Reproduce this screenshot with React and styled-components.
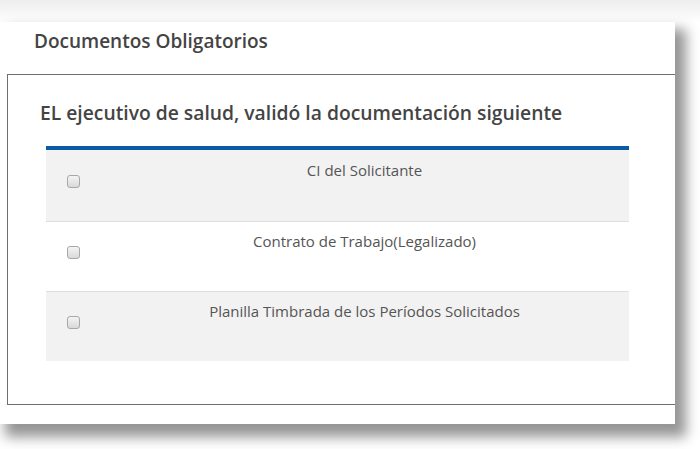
import React from "react";
import styled, { createGlobalStyle } from "styled-components";

const Global = createGlobalStyle`
  html, body { margin: 0; padding: 0; background: #fff; }
  body { width: 700px; height: 449px; overflow: hidden; font-family: "Open Sans", sans-serif; }
`;

const Stage = styled.div`
  width: 700px;
  height: 449px;
  padding-top: 22px;
  box-sizing: border-box;
  background: linear-gradient(to bottom, #eeeeee 0px, #f6f6f6 12px, #ffffff 22px);
  overflow: hidden;
`;

const Card = styled.div`
  width: 675px;
  height: 402px;
  background: #fff;
  overflow: hidden;
  box-shadow: 8px 10px 12px 3px rgba(0, 0, 0, 0.42);
  display: flex;
  flex-direction: column;
`;

const Title = styled.h3`
  margin: 0;
  padding: 6px 0 0 34px;
  height: 52px;
  box-sizing: border-box;
  font-size: 19px;
  line-height: 26px;
  font-weight: 600;
  color: #444;
`;

const Box = styled.div`
  margin-left: 7px;
  height: 331px;
  border: 1px solid #6f6f6f;
  border-right: none;
  box-sizing: border-box;
  padding: 26px 0 0 32px;
`;

const Heading = styled.h4`
  margin: 0 0 22px 0;
  font-size: 19.3px;
  line-height: 23px;
  font-weight: 600;
  color: #444;
`;

const Table = styled.div`
  width: 583px;
  margin-left: 6px;
  border-top: 4px solid #0a5aa5;
  display: flex;
  flex-direction: column;
`;

const Row = styled.div`
  display: flex;
  box-sizing: border-box;
  height: ${(p) => (p.$first ? "71px" : "70px")};
  background: ${(p) => (p.$shade ? "#f2f2f2" : "#fff")};
  border-top: ${(p) => (p.$first ? "none" : "1px solid #dedede")};
`;

const CheckCell = styled.div`
  width: 54px;
  display: flex;
  justify-content: center;
  padding-top: ${(p) => (p.$first ? "25px" : "24px")};
  box-sizing: border-box;
`;

const Check = styled.span`
  display: block;
  width: 13px;
  height: 13px;
  box-sizing: border-box;
  border: 1px solid #a8a8a8;
  border-radius: 3px;
  background: linear-gradient(to bottom, #f4f4f4, #d9d9d9);
`;

const LabelCell = styled.div`
  flex: 1;
  text-align: center;
  padding-top: ${(p) => (p.$first ? "9px" : "8px")};
  font-size: 15px;
  line-height: 22px;
  color: #555;
`;

const docs = [
  "CI del Solicitante",
  "Contrato de Trabajo(Legalizado)",
  "Planilla Timbrada de los Períodos Solicitados",
];

export default function App() {
  return (
    <>
      <Global />
      <Stage>
        <Card>
          <Title>Documentos Obligatorios</Title>
          <Box>
            <Heading>EL ejecutivo de salud, validó la documentación siguiente</Heading>
            <Table>
              {docs.map((d, i) => (
                <Row key={d} $shade={i % 2 === 0} $first={i === 0}>
                  <CheckCell $first={i === 0}>
                    <Check />
                  </CheckCell>
                  <LabelCell $first={i === 0}>{d}</LabelCell>
                </Row>
              ))}
            </Table>
          </Box>
        </Card>
      </Stage>
    </>
  );
}
